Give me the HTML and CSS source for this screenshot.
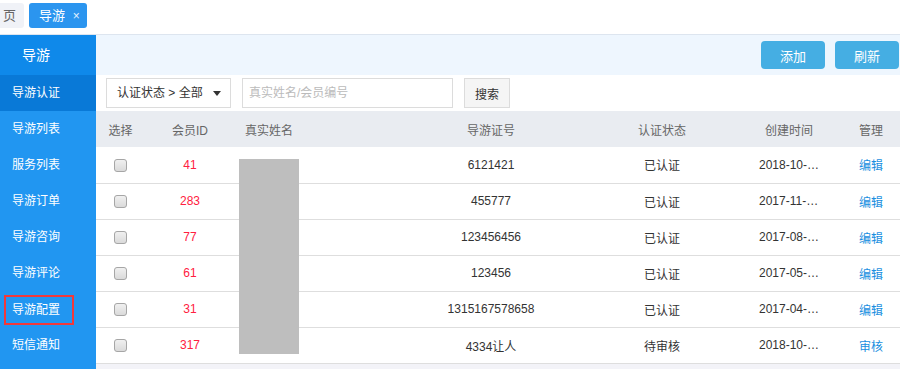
FILE: index.html
```html
<!DOCTYPE html>
<html lang="zh-CN">
<head>
    <meta charset="UTF-8">
    <title>导游认证</title>
    <link rel="stylesheet" href="styles.css">
</head>
<body>
    <!-- Tabs -->
    <div class="tabbar">
        <span class="tab">页</span>
        <span class="tab tab-active">导游 <i class="tab-close">×</i></span>
    </div>

    <div class="layout">
        <!-- Sidebar -->
        <ul class="sidebar">
            <li class="side-head">导游</li>
            <li class="active">导游认证</li>
            <li>导游列表</li>
            <li>服务列表</li>
            <li>导游订单</li>
            <li>导游咨询</li>
            <li>导游评论</li>
            <li><span class="marked">导游配置</span></li>
            <li>短信通知</li>
        </ul>

        <div class="main">
            <div class="toolbar">
                <button class="btn">添加</button>
                <button class="btn">刷新</button>
            </div>

            <div class="filters">
                <div class="select">认证状态 &gt; 全部 <span class="caret"></span></div>
                <div class="search-input">真实姓名/会员编号</div>
                <button class="search-btn">搜索</button>
            </div>

            <div class="table-wrap">
                <table class="grid">
                    <colgroup>
                        <col style="width:49px">
                        <col style="width:90px">
                        <col style="width:159px">
                        <col style="width:194px">
                        <col style="width:148px">
                        <col style="width:106px">
                        <col style="width:58px">
                    </colgroup>
                    <thead>
                        <tr>
                            <th>选择</th>
                            <th>会员ID</th>
                            <th class="left">真实姓名</th>
                            <th>导游证号</th>
                            <th>认证状态</th>
                            <th>创建时间</th>
                            <th>管理</th>
                        </tr>
                    </thead>
                    <tbody>
                        <tr>
                            <td><span class="check"></span></td>
                            <td class="uid">41</td>
                            <td></td>
                            <td>6121421</td>
                            <td>已认证</td>
                            <td class="date">2018-10-08 12:00</td>
                            <td><a class="link">编辑</a></td>
                        </tr>
                        <tr>
                            <td><span class="check"></span></td>
                            <td class="uid">283</td>
                            <td></td>
                            <td>455777</td>
                            <td>已认证</td>
                            <td class="date">2017-11-20 09:12</td>
                            <td><a class="link">编辑</a></td>
                        </tr>
                        <tr>
                            <td><span class="check"></span></td>
                            <td class="uid">77</td>
                            <td></td>
                            <td>123456456</td>
                            <td>已认证</td>
                            <td class="date">2017-08-14 16:40</td>
                            <td><a class="link">编辑</a></td>
                        </tr>
                        <tr>
                            <td><span class="check"></span></td>
                            <td class="uid">61</td>
                            <td></td>
                            <td>123456</td>
                            <td>已认证</td>
                            <td class="date">2017-05-02 10:05</td>
                            <td><a class="link">编辑</a></td>
                        </tr>
                        <tr>
                            <td><span class="check"></span></td>
                            <td class="uid">31</td>
                            <td></td>
                            <td>1315167578658</td>
                            <td>已认证</td>
                            <td class="date">2017-04-11 08:30</td>
                            <td><a class="link">编辑</a></td>
                        </tr>
                        <tr>
                            <td><span class="check"></span></td>
                            <td class="uid">317</td>
                            <td></td>
                            <td>4334让人</td>
                            <td>待审核</td>
                            <td class="date">2018-10-19 14:22</td>
                            <td><a class="link">审核</a></td>
                        </tr>
                    </tbody>
                </table>
                <!-- redaction block over the name column -->
                <div class="mask"></div>
            </div>
        </div>
    </div>
</body>
</html>
```

FILE: styles.css
```css
* {
    margin: 0;
    padding: 0;
    box-sizing: border-box;
}

body {
    font-family: "Liberation Sans", "Noto Sans CJK SC", sans-serif;
    font-size: 12px;
    color: #333;
    background: #fff;
    height: 369px;
    overflow: hidden;
}

/* Tab bar */
.tabbar {
    height: 35px;
    display: flex;
    gap: 5px;
    padding-top: 3px;
    border-bottom: 1px solid #dde5ef;
    margin-left: -8px;
}

.tab {
    height: 25px;
    line-height: 25px;
    padding: 0 8px 0 11px;
    background: #f0f2f7;
    color: #666;
    border-radius: 3px;
    font-size: 13px;
}

.tab-active {
    background: #2b95ef;
    color: #fff;
    padding: 0 7px 0 10px;
}

.tab-close {
    font-style: normal;
    font-size: 12px;
    margin-left: 4px;
    color: #e3f1ff;
}

.layout {
    display: flex;
    height: 334px;
}

/* Sidebar */
.sidebar {
    list-style: none;
    width: 96px;
    flex-shrink: 0;
    background: #2196f1;
    color: #fff;
}

.sidebar li {
    height: 36px;
    line-height: 36px;
    padding-left: 12px;
    font-size: 12px;
}

.sidebar .side-head {
    height: 40px;
    line-height: 40px;
    padding-left: 22px;
    font-size: 14px;
    background: #0f89ea;
}

.sidebar .active {
    background: #0979d7;
}

.marked {
    display: inline-block;
    line-height: 16px;
    margin-left: -8px;
    padding: 5px 12px 5px 6px;
    border: 2px solid #f2383a;
    vertical-align: middle;
}

/* Main */
.main {
    flex: 1;
    display: flex;
    flex-direction: column;
    background: #f3f3f8;
}

.toolbar {
    height: 40px;
    background: #eef6fe;
    display: flex;
    justify-content: flex-end;
    align-items: center;
    gap: 10px;
    padding-right: 1px;
}

.btn {
    width: 64px;
    height: 28px;
    border: none;
    border-radius: 4px;
    background: #45aee3;
    color: #fff;
    font-family: inherit;
    font-size: 13px;
}

.filters {
    height: 36px;
    background: #fff;
    display: flex;
    align-items: center;
    gap: 11px;
    padding-left: 10px;
}

.select {
    width: 125px;
    height: 30px;
    line-height: 28px;
    border: 1px solid #dcdcdc;
    padding-left: 10px;
    color: #333;
    display: flex;
    align-items: center;
}

.caret {
    margin-left: 10px;
    border-left: 4px solid transparent;
    border-right: 4px solid transparent;
    border-top: 5px solid #333;
}

.search-input {
    width: 211px;
    height: 30px;
    line-height: 28px;
    border: 1px solid #dcdcdc;
    padding-left: 6px;
    color: #bbb;
}

.search-btn {
    width: 46px;
    height: 30px;
    border: 1px solid #dcdcdc;
    background: #f5f5f5;
    color: #333;
    font-family: inherit;
    font-size: 12px;
}

/* Table */
.table-wrap {
    background: #fff;
    position: relative;
}

.grid {
    width: 100%;
    table-layout: fixed;
    border-collapse: collapse;
}

.grid th {
    height: 36px;
    background: #e9ecf1;
    color: #666;
    font-weight: normal;
    text-align: center;
}

.grid th.left {
    text-align: left;
    padding-left: 10px;
}

.grid td {
    height: 36px;
    text-align: center;
    border-bottom: 1px solid #dedede;
    color: #333;
}

.mask {
    position: absolute;
    top: 48px;
    left: 143px;
    width: 60px;
    height: 195px;
    background: #bebebe;
}

.grid td.uid {
    color: #ff2040;
}

.grid td.date {
    white-space: nowrap;
    overflow: hidden;
    text-overflow: ellipsis;
    padding: 0 20px 0 23px;
}

.check {
    display: inline-block;
    width: 13px;
    height: 13px;
    border: 1px solid #a6a6a6;
    border-radius: 3px;
    background: linear-gradient(#f0f0f0, #dadada);
    vertical-align: middle;
}

.link {
    color: #1a8fe0;
    cursor: pointer;
}
```
